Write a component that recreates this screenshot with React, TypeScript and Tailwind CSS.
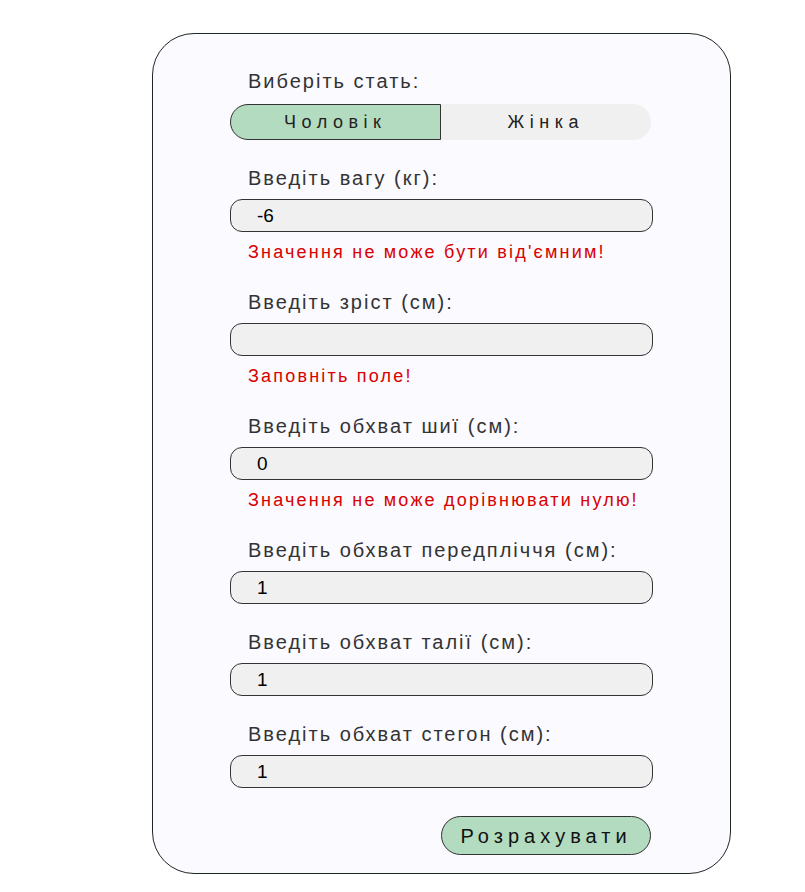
import { useState } from "react";

type Field = { label: string; value: string; error?: string };

const fields: Field[] = [
  { label: "Введіть вагу (кг):", value: "-6", error: "Значення не може бути від'ємним!" },
  { label: "Введіть зріст (см):", value: "", error: "Заповніть поле!" },
  { label: "Введіть обхват шиї (см):", value: "0", error: "Значення не може дорівнювати нулю!" },
  { label: "Введіть обхват передпліччя (см):", value: "1" },
  { label: "Введіть обхват талії (см):", value: "1" },
  { label: "Введіть обхват стегон (см):", value: "1" },
];

export default function App() {
  const [gender, setGender] = useState<"male" | "female">("male");
  const [values, setValues] = useState(fields.map((f) => f.value));

  return (
    <div className="min-h-[892px] bg-white pt-[33px] pl-[152px] font-['Liberation_Sans',Arial,sans-serif]">
      <div className="w-[579px] rounded-[42px] border border-[#1f2626] bg-[#fafaff] pl-[77px] pt-[35px] pb-[18px]">
        <div className="pl-[18px] text-[20px] leading-[24px] tracking-[2px] text-[#333]">Виберіть стать:</div>
        <div className="mt-[11px] flex h-[36px] w-[421px] rounded-full bg-[#f0f0f0]">
          <button
            onClick={() => setGender("male")}
            className={
              gender === "male"
                ? "w-1/2 rounded-l-full border border-[#333] bg-[#b3dbc0] text-[18px] tracking-[5.5px] text-[#222]"
                : "w-1/2 rounded-l-full text-[18px] tracking-[5.5px] text-[#222]"
            }
          >
            Чоловік
          </button>
          <button
            onClick={() => setGender("female")}
            className={
              gender === "female"
                ? "w-1/2 rounded-r-full border border-[#333] bg-[#b3dbc0] text-[18px] tracking-[5.5px] text-[#222]"
                : "w-1/2 rounded-r-full text-[18px] tracking-[5.5px] text-[#222]"
            }
          >
            Жінка
          </button>
        </div>

        {fields.map((f, i) => (
          <div key={f.label} className="mt-[26px]">
            <div className="pl-[18px] text-[20px] leading-[24px] tracking-[2px] text-[#333]">{f.label}</div>
            <input
              type="text"
              value={values[i]}
              onChange={(e) => setValues(values.map((v, j) => (j === i ? e.target.value : v)))}
              className="mt-[9px] block h-[33px] w-[423px] rounded-[12px] border border-[#333] bg-[#f0f0f0] pl-[26px] text-[19px] text-black outline-none"
            />
            {f.error && (
              <div className="mt-[8px] pl-[18px] text-[18px] leading-[24px] tracking-[2.2px] text-[#d80000]">{f.error}</div>
            )}
          </div>
        ))}

        <div className="mt-[28px] flex w-[421px] justify-end">
          <button className="h-[39px] w-[210px] rounded-full border border-[#333] bg-[#b3dbc0] text-[20px] tracking-[5px] text-[#111]">
            Розрахувати
          </button>
        </div>
      </div>
    </div>
  );
}
